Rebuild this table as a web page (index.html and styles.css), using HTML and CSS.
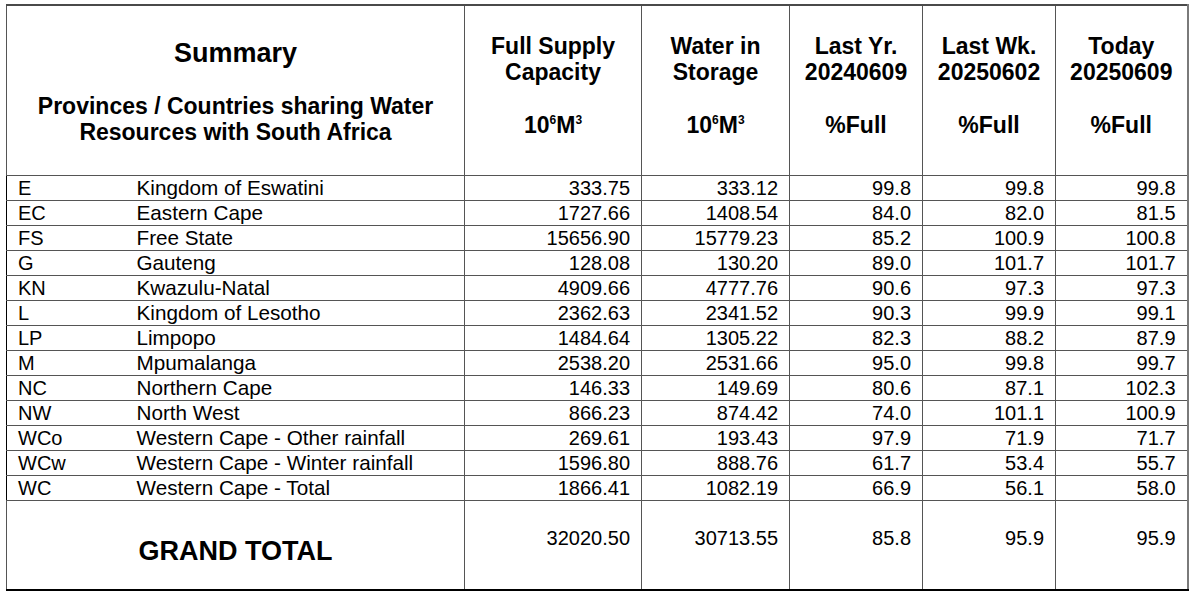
FILE: index.html
```html
<!DOCTYPE html>
<html>
<head>
<meta charset="utf-8">
<link rel="stylesheet" href="styles.css">
</head>
<body>
<table class="summary">
  <colgroup>
    <col class="c-code"><col class="c-name"><col class="c-fsc"><col class="c-wis"><col class="c-pct"><col class="c-pct"><col class="c-pct2">
  </colgroup>
  <thead>
    <tr class="head">
      <th colspan="2" class="h-title">
        <div class="title">Summary</div>
        <div class="subtitle">Provinces / Countries sharing Water<br>Resources with South Africa</div>
      </th>
      <th class="h-col"><div class="hl">Full Supply</div><div class="hl">Capacity</div><div class="hl blank"></div><div class="hl">10<sup>6</sup>M<sup>3</sup></div></th>
      <th class="h-col"><div class="hl">Water in</div><div class="hl">Storage</div><div class="hl blank"></div><div class="hl">10<sup>6</sup>M<sup>3</sup></div></th>
      <th class="h-col"><div class="hl">Last Yr.</div><div class="hl">20240609</div><div class="hl blank"></div><div class="hl">%Full</div></th>
      <th class="h-col"><div class="hl">Last Wk.</div><div class="hl">20250602</div><div class="hl blank"></div><div class="hl">%Full</div></th>
      <th class="h-col"><div class="hl">Today</div><div class="hl">20250609</div><div class="hl blank"></div><div class="hl">%Full</div></th>
    </tr>
  </thead>
  <tbody>
    <tr><td class="code">E</td><td class="name">Kingdom of Eswatini</td><td class="num">333.75</td><td class="num">333.12</td><td class="num">99.8</td><td class="num">99.8</td><td class="num">99.8</td></tr>
    <tr><td class="code">EC</td><td class="name">Eastern Cape</td><td class="num">1727.66</td><td class="num">1408.54</td><td class="num">84.0</td><td class="num">82.0</td><td class="num">81.5</td></tr>
    <tr><td class="code">FS</td><td class="name">Free State</td><td class="num">15656.90</td><td class="num">15779.23</td><td class="num">85.2</td><td class="num">100.9</td><td class="num">100.8</td></tr>
    <tr><td class="code">G</td><td class="name">Gauteng</td><td class="num">128.08</td><td class="num">130.20</td><td class="num">89.0</td><td class="num">101.7</td><td class="num">101.7</td></tr>
    <tr><td class="code">KN</td><td class="name">Kwazulu-Natal</td><td class="num">4909.66</td><td class="num">4777.76</td><td class="num">90.6</td><td class="num">97.3</td><td class="num">97.3</td></tr>
    <tr><td class="code">L</td><td class="name">Kingdom of Lesotho</td><td class="num">2362.63</td><td class="num">2341.52</td><td class="num">90.3</td><td class="num">99.9</td><td class="num">99.1</td></tr>
    <tr><td class="code">LP</td><td class="name">Limpopo</td><td class="num">1484.64</td><td class="num">1305.22</td><td class="num">82.3</td><td class="num">88.2</td><td class="num">87.9</td></tr>
    <tr><td class="code">M</td><td class="name">Mpumalanga</td><td class="num">2538.20</td><td class="num">2531.66</td><td class="num">95.0</td><td class="num">99.8</td><td class="num">99.7</td></tr>
    <tr><td class="code">NC</td><td class="name">Northern Cape</td><td class="num">146.33</td><td class="num">149.69</td><td class="num">80.6</td><td class="num">87.1</td><td class="num">102.3</td></tr>
    <tr><td class="code">NW</td><td class="name">North West</td><td class="num">866.23</td><td class="num">874.42</td><td class="num">74.0</td><td class="num">101.1</td><td class="num">100.9</td></tr>
    <tr><td class="code">WCo</td><td class="name">Western Cape - Other rainfall</td><td class="num">269.61</td><td class="num">193.43</td><td class="num">97.9</td><td class="num">71.9</td><td class="num">71.7</td></tr>
    <tr><td class="code">WCw</td><td class="name">Western Cape - Winter rainfall</td><td class="num">1596.80</td><td class="num">888.76</td><td class="num">61.7</td><td class="num">53.4</td><td class="num">55.7</td></tr>
    <tr><td class="code">WC</td><td class="name">Western Cape - Total</td><td class="num">1866.41</td><td class="num">1082.19</td><td class="num">66.9</td><td class="num">56.1</td><td class="num">58.0</td></tr>
  </tbody>
  <tfoot>
    <tr class="total">
      <td colspan="2" class="total-label">GRAND TOTAL</td>
      <td class="num tnum">32020.50</td>
      <td class="num tnum">30713.55</td>
      <td class="num tnum">85.8</td>
      <td class="num tnum">95.9</td>
      <td class="num tnum">95.9</td>
    </tr>
  </tfoot>
</table>
</body>
</html>
```

FILE: styles.css
```css
html, body {
  margin: 0;
  padding: 0;
  background: #ffffff;
}

body {
  padding: 4px 0 0 6px;
  font-family: "Liberation Sans", Arial, sans-serif;
  color: #000;
}

.summary {
  border-collapse: collapse;
  table-layout: fixed;
  width: 1182px;
  border-top: 2px solid #4a4a4a;
  border-left: 1px solid #000;
  border-right: 2px solid #7a7a7a;
  border-bottom: 2px solid #000;
}

.c-code { width: 124px; }
.c-name { width: 334px; }
.c-fsc { width: 177px; }
.c-wis { width: 148px; }
.c-pct { width: 133px; }
.c-pct2 { width: 132px; }

.summary th,
.summary td {
  padding: 0;
  border: 1px solid #555;
}

.head th {
  height: 170px;
  vertical-align: top;
  text-align: center;
  font-weight: bold;
  font-size: 23px;
  line-height: 26.4px;
  padding-top: 27px;
  box-sizing: border-box;
}

.h-title {
  padding-top: 31px !important;
}

.title {
  font-size: 27px;
  line-height: 32px;
  margin-bottom: 24px;
}

.subtitle {
  font-size: 23px;
  line-height: 26px;
}

.hl {
  height: 26.4px;
}

.head sup {
  font-size: 12px;
  line-height: 0;
  vertical-align: 9px;
}

tbody td {
  height: 24px;
  font-size: 20px;
  line-height: 22px;
  padding: 0;
  vertical-align: middle;
  white-space: nowrap;
  overflow: hidden;
}

tbody td.code,
tbody td.name {
  border-right: none;
  border-left: none;
}

tbody td.code {
  border-left: 1px solid #000;
  padding-left: 11px;
}

tbody td.name {
  padding-left: 6px;
  font-size: 20.7px;
}

td.num {
  text-align: right;
  padding-right: 11px;
}

.total td {
  height: 90px;
  box-sizing: border-box;
  vertical-align: top;
  font-size: 20px;
  line-height: 22px;
}

.total-label {
  text-align: center;
  font-weight: bold;
  font-size: 27px !important;
  line-height: 30px !important;
  padding-top: 35px !important;
}

.tnum {
  padding-top: 26px !important;
}
```
